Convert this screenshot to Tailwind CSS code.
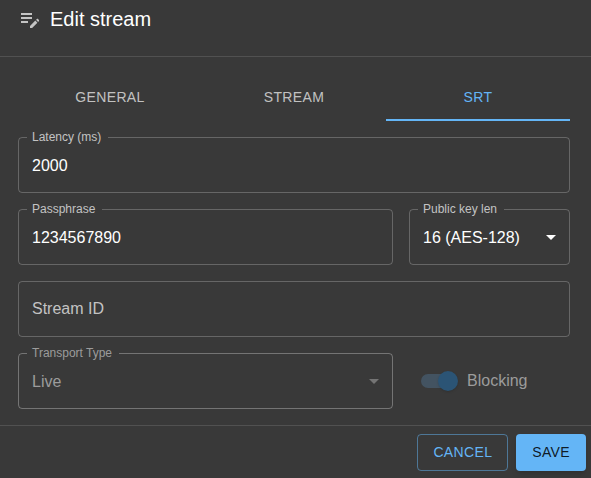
<!DOCTYPE html>
<html lang="en">
<head>
<meta charset="utf-8">
<meta name="viewport" content="width=device-width, initial-scale=1">
<title>Edit stream</title>
<script src="https://cdn.jsdelivr.net/npm/@tailwindcss/browser@4"></script>
</head>
<body class="bg-[#393939] text-white font-['Liberation_Sans',Arial,sans-serif]">
<main class="flex min-h-screen flex-col">
  <header class="flex h-[57px] items-start gap-2 border-b border-white/12 pt-[7px] pl-[18px]">
    <svg class="size-6 text-white/70" viewBox="0 0 24 24" fill="currentColor" aria-hidden="true"><path d="M3 10h11v2H3v-2zm0-2h11V6H3v2zm0 8h7v-2H3v2zm15.01-3.13.71-.71c.39-.39 1.02-.39 1.41 0l.71.71c.39.39.39 1.02 0 1.41l-.71.71-2.12-2.12zm-.71.71-5.3 5.3V21h2.12l5.3-5.3-2.12-2.12z"/></svg>
    <h1 class="text-xl leading-6">Edit stream</h1>
  </header>

  <form id="stream" class="flex flex-col gap-4 py-4 pr-[21px] pl-[18px]">
    <div role="tablist" class="grid h-12 grid-cols-3 text-sm tracking-wide uppercase">
      <button type="button" role="tab" aria-selected="false" class="border-b-2 border-transparent pt-0.5 uppercase text-white/70">General</button>
      <button type="button" role="tab" aria-selected="false" class="border-b-2 border-transparent pt-0.5 uppercase text-white/70">Stream</button>
      <button type="button" role="tab" aria-selected="true" class="border-b-2 border-[#64b5f6] pt-0.5 uppercase text-[#64b5f6]">SRT</button>
    </div>

    <div class="relative h-14 rounded border border-white/23">
      <label for="latency" class="absolute -top-[9px] left-2 bg-[#393939] pr-[7px] pl-[5px] text-xs leading-4 text-[#c3c3c3]">Latency (ms)</label>
      <input id="latency" type="text" value="2000" class="h-full w-full bg-transparent px-[13px] pt-0.5 text-base outline-none">
    </div>

    <div class="flex gap-4">
      <div class="relative h-14 flex-1 rounded border border-white/23">
        <label for="pass" class="absolute -top-[9px] left-2 bg-[#393939] pr-[7px] pl-[5px] text-xs leading-4 text-[#c3c3c3]">Passphrase</label>
        <input id="pass" type="text" value="1234567890" class="h-full w-full bg-transparent px-[13px] pt-0.5 text-base outline-none">
      </div>
      <div class="relative h-14 w-[161px] rounded border border-white/23">
        <label for="keylen" class="absolute -top-[9px] left-2 bg-[#393939] pr-[7px] pl-[5px] text-xs leading-4 text-[#c3c3c3]">Public key len</label>
        <select id="keylen" class="h-full w-full appearance-none bg-transparent px-[13px] pt-0.5 text-base outline-none"><option>16 (AES-128)</option></select>
        <svg class="pointer-events-none absolute top-[15px] right-1.5 size-6" viewBox="0 0 24 24" fill="currentColor" aria-hidden="true"><path d="M7 10l5 5 5-5z"/></svg>
      </div>
    </div>

    <div class="h-14 rounded border border-white/23">
      <input id="streamid" type="text" aria-label="Stream ID" placeholder="Stream ID" class="h-full w-full bg-transparent px-[13px] text-base outline-none placeholder:text-[#c3c3c3]">
    </div>

    <div class="flex gap-4">
      <div class="relative h-14 flex-1 rounded border border-white/30">
        <label for="transport" class="absolute -top-[9px] left-2 bg-[#393939] pr-[7px] pl-[5px] text-xs leading-4 text-[#9c9c9c]">Transport Type</label>
        <select id="transport" disabled class="h-full w-full appearance-none bg-transparent px-[13px] pt-0.5 text-base text-[#9c9c9c] opacity-100 outline-none"><option>Live</option></select>
        <svg class="pointer-events-none absolute top-[15px] right-1.5 size-6 text-white/30" viewBox="0 0 24 24" fill="currentColor" aria-hidden="true"><path d="M7 10l5 5 5-5z"/></svg>
      </div>
      <label class="flex h-14 w-[161px] items-center gap-3 pl-3 text-base text-[#9c9c9c]">
        <input type="checkbox" role="switch" checked disabled class="relative h-3.5 w-[34px] shrink-0 appearance-none rounded-full bg-[#435361] before:absolute before:-top-[3px] before:-right-[3px] before:size-5 before:rounded-full before:bg-[#2b5475] before:shadow before:content-['']">
        Blocking
      </label>
    </div>
  </form>

  <footer class="flex flex-1 items-start justify-end gap-2 border-t border-white/12 pt-2 pr-[5px] text-sm tracking-wide">
    <button type="button" class="h-[37px] rounded border border-[#64b5f6]/50 px-[15px] pb-0.5 uppercase text-[#64b5f6]">Cancel</button>
    <button type="submit" form="stream" class="h-[37px] rounded bg-[#64b5f6] px-4 pb-0.5 uppercase text-black/87 shadow-md">Save</button>
  </footer>
</main>
</body>
</html>
